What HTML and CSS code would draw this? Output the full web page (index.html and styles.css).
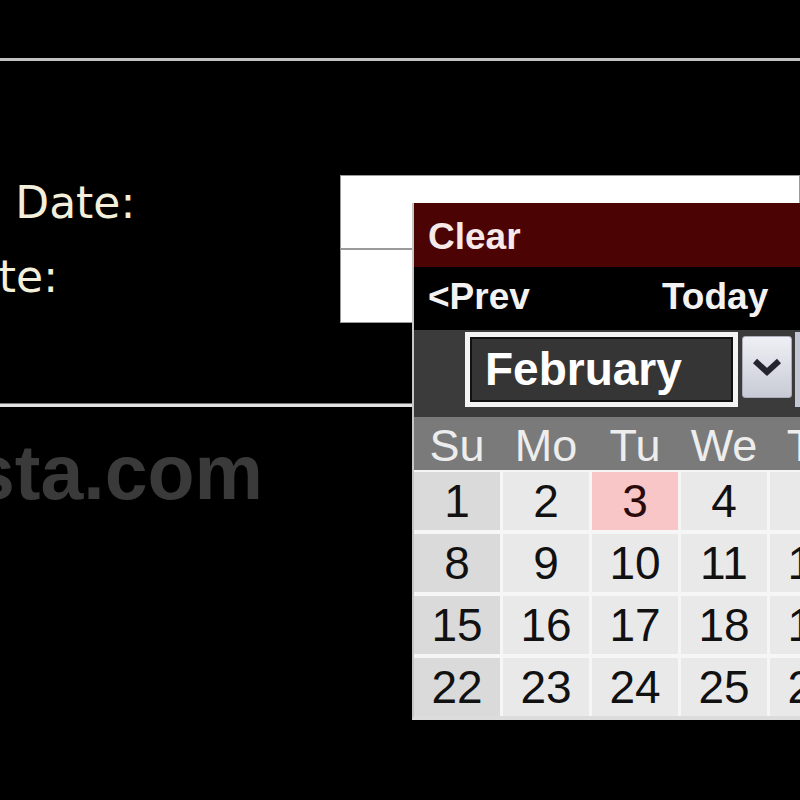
FILE: index.html
```html
<!DOCTYPE html>
<html lang="en">

<head>
    <meta charset="UTF-8">
    <meta name="viewport" content="width=device-width, initial-scale=1.0">
    <title>Booking Dates</title>
    <link rel="stylesheet" href="styles.css">
</head>

<body>
    <div class="rule rule-top"></div>

    <div class="form">
        <div class="row">
            <label class="label" for="depart">Departure Date:</label>
            <div class="field">
                <input class="input" type="text" id="depart">

                <div class="datepicker">
                    <div class="dp-inner">
                        <div class="dp-clear">Clear</div>
                        <div class="dp-nav">
                            <span class="dp-prev">&lt;Prev</span>
                            <span class="dp-today">Today</span>
                            <span class="dp-next">Next&gt;</span>
                        </div>
                        <div class="dp-month">
                            <div class="dp-select dp-select-month">February</div>
                            <div class="dp-button">
                                <svg width="32" height="20" viewBox="0 0 32 20">
                                    <polyline points="4,4 16,15 28,4" fill="none" stroke="#25252f" stroke-width="6" />
                                </svg>
                            </div>
                            <div class="dp-select dp-select-year">2009</div>
                        </div>
                        <div class="dp-head">
                            <span>Su</span><span>Mo</span><span>Tu</span><span>We</span><span>Th</span><span>Fr</span><span>Sa</span>
                        </div>
                        <div class="dp-days">
                            <span class="day sun">1</span><span class="day">2</span><span class="day today">3</span><span class="day">4</span><span class="day">5</span><span class="day">6</span><span class="day">7</span>
                            <span class="day sun">8</span><span class="day">9</span><span class="day">10</span><span class="day">11</span><span class="day">12</span><span class="day">13</span><span class="day">14</span>
                            <span class="day sun">15</span><span class="day">16</span><span class="day">17</span><span class="day">18</span><span class="day">19</span><span class="day">20</span><span class="day">21</span>
                            <span class="day sun">22</span><span class="day">23</span><span class="day">24</span><span class="day">25</span><span class="day">26</span><span class="day">27</span><span class="day">28</span>
                        </div>
                    </div>
                </div>
            </div>
        </div>
        <div class="row">
            <label class="label" for="return">Return Date:</label>
            <div class="field">
                <input class="input" type="text" id="return">
            </div>
        </div>
    </div>

    <div class="rule rule-bottom"></div>

    <div class="watermark">sta.com</div>
</body>

</html>
```

FILE: styles.css
```css
html,
body {
    overflow: hidden;
}

body {
    margin: 0;
    width: 800px;
    height: 800px;
    background: #000;
    font-family: "Liberation Sans", Arial, sans-serif;
}

.rule {
    height: 3px;
    background: #c2c2c2;
}

.rule-top {
    margin-top: 58px;
}

.rule-bottom {
    margin-top: 80px;
    height: 4px;
    background: #e2e2e2;
    border-top: 1px solid #777;
    box-sizing: border-box;
}

.form {
    margin-top: 114px;
}

.row {
    display: flex;
    height: 74px;
}

.label {
    flex: 0 0 562px;
    margin-left: -222px;
    padding-top: 2px;
    font-family: "DejaVu Sans", Verdana, sans-serif;
    font-size: 44px;
    color: #f3efda;
    white-space: nowrap;
}

.field {
    position: relative;
    flex: 1;
}

.input {
    display: block;
    width: 100%;
    height: 74px;
    margin: 0;
    box-sizing: border-box;
    border: 1px solid #9a9a9a;
    background: #fff;
}

/* popup calendar */

.datepicker {
    position: absolute;
    left: 72px;
    top: 28px;
    z-index: 10;
    width: 388px;
    overflow: hidden;
    border-left: 2px solid #c6c6c6;
    border-bottom: 4px solid #dcdcdc;
    background: #f6f6f6;
}

.dp-inner {
    width: 640px;
}

.dp-clear {
    height: 64px;
    padding-left: 14px;
    background: #4b0303;
    color: #f6e9e9;
    font-size: 37px;
    font-weight: bold;
    line-height: 68px;
}

.dp-nav {
    display: flex;
    height: 63px;
    padding-left: 14px;
    background: #000;
    color: #f2f2f2;
    font-size: 37px;
    font-weight: bold;
    line-height: 60px;
}

.dp-prev {
    width: 234px;
}

.dp-next {
    margin-left: auto;
    padding-right: 14px;
}

.dp-month {
    display: flex;
    align-items: flex-start;
    height: 87px;
    box-sizing: border-box;
    padding: 2px 0 0 51px;
    background: #3b3b3b;
}

.dp-select {
    height: 75px;
    box-sizing: border-box;
    border: 5px solid #f4f4f4;
    box-shadow: inset 0 0 0 2px #111;
    background: #353535;
    color: #fff;
    font-size: 46px;
    font-weight: bold;
    line-height: 65px;
    padding-left: 15px;
}

.dp-select-month {
    width: 273px;
}

.dp-select-year {
    width: 160px;
    margin-left: 3px;
    border-color: #c3c7d3;
}

.dp-button {
    display: flex;
    align-items: center;
    justify-content: center;
    width: 50px;
    height: 62px;
    margin: 4px 0 0 4px;
    box-sizing: border-box;
    border: 1px solid #a9adb9;
    border-radius: 3px;
    background: linear-gradient(#eef0f5, #c8cbd5);
}

.dp-head,
.dp-days {
    display: grid;
    grid-template-columns: repeat(7, 86px);
    column-gap: 3px;
}

.dp-head {
    height: 53px;
    background: #7a7a7a;
    color: #ededed;
    font-size: 45px;
    line-height: 58px;
    overflow: hidden;
}

.dp-head span {
    text-align: center;
}

.dp-days {
    grid-auto-rows: 58px;
    row-gap: 4px;
    padding-top: 2px;
}

.day {
    background: #e9e9e9;
    color: #111;
    font-size: 46px;
    line-height: 58px;
    text-align: center;
}

.day.sun {
    background: #dadada;
}

.day.today {
    background: #f8c6c6;
    color: #2a0a0a;
}

.watermark {
    margin: 21px 0 0 -28px;
    color: #3a3a3a;
    font-size: 77px;
    font-weight: bold;
    white-space: nowrap;
}
```
